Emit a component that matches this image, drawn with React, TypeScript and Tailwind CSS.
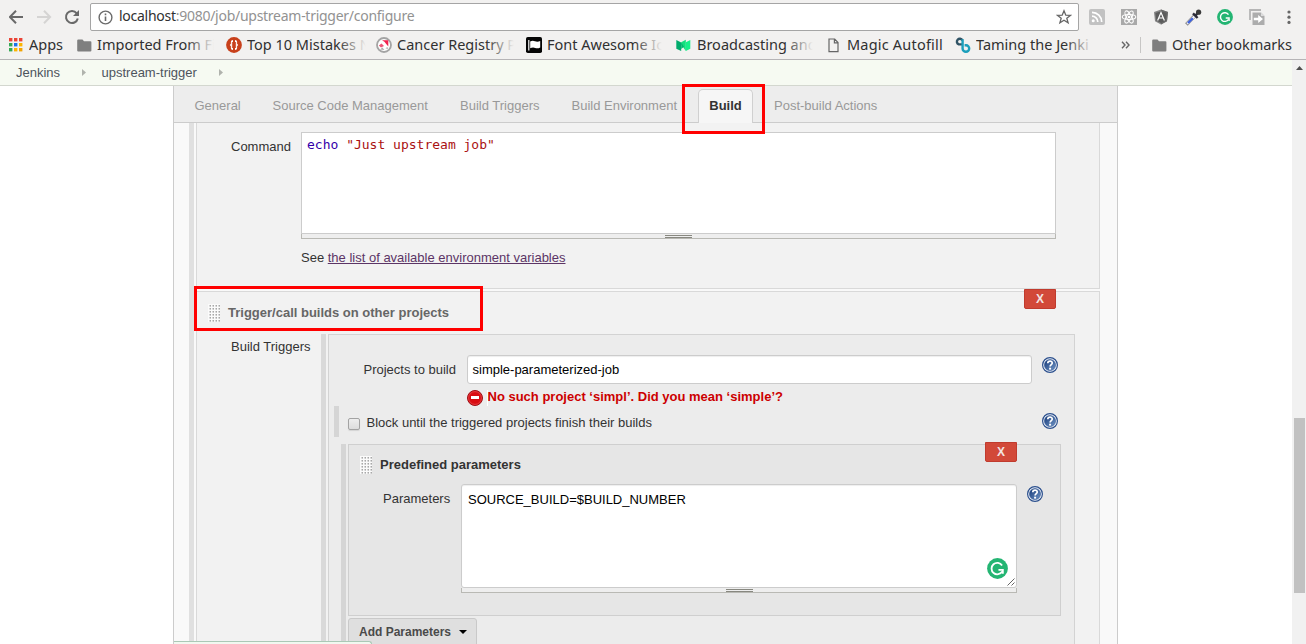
import type { ReactNode } from "react";

function HelpIcon() {
  return (
    <svg width="16" height="16" viewBox="0 0 16 16" className="shrink-0">
      <defs>
        <linearGradient id="helpFill" x1="0" y1="0" x2="1" y2="1">
          <stop offset="0" stopColor="#173a78" />
          <stop offset="1" stopColor="#7095c6" />
        </linearGradient>
      </defs>
      <circle cx="8" cy="8" r="7.4" fill="#f2f6fb" stroke="#2b4f8d" strokeWidth="1.2" />
      <circle cx="8" cy="8" r="5.6" fill="url(#helpFill)" stroke="#2b4f8d" strokeWidth="0.5" />
      <path d="M5.8 6.3C5.8 3.4 10.4 3.5 10.2 6.2C10.1 7.6 8.1 7.6 8.1 9.5" fill="none" stroke="#fff" strokeWidth="1.7" />
      <rect x="7.1" y="10.7" width="2" height="1.9" fill="#fff" />
    </svg>
  );
}

function ErrorIcon() {
  return (
    <svg width="16" height="16" viewBox="0 0 16 16" className="shrink-0">
      <circle cx="8" cy="8" r="7.5" fill="#d90d12" stroke="#9c1015" />
      <circle cx="8" cy="8" r="6.4" fill="none" stroke="#e8484b" strokeWidth="0.8" />
      <rect x="4" y="6" width="8" height="3" fill="#fff" />
    </svg>
  );
}

function GrammarlyIcon({ size }: { size: number }) {
  return (
    <svg width={size} height={size} viewBox="0 0 22 22">
      <circle cx="11" cy="11" r="10.9" fill="#24b573" />
      <path d="M15.8 7.8A6 6 0 1 0 15.9 14.2" fill="none" stroke="#fff" strokeWidth="1.9" />
      <path d="M12 12.4H16.6V16.4" fill="none" stroke="#fff" strokeWidth="1.9" />
    </svg>
  );
}

function DragHandle() {
  return (
    <svg width="12" height="18" viewBox="0 0 12 18" className="shrink-0" shapeRendering="crispEdges">
      <defs>
        <pattern id="dots" width="3" height="3" patternUnits="userSpaceOnUse">
          <rect width="3" height="3" fill="#fbfbfb" />
          <rect x="1" y="1" width="2" height="1" fill="#d2d2d2" />
          <rect x="1" y="2" width="1" height="1" fill="#e4e4e4" />
          <rect x="2" y="1" width="1" height="1" fill="#a8a8a8" />
          <rect x="2" y="2" width="1" height="1" fill="#c8c8c8" />
        </pattern>
      </defs>
      <rect width="12" height="18" fill="url(#dots)" />
    </svg>
  );
}

function ResizeBar() {
  return (
    <div className="flex h-[5px] items-start justify-center border-x border-b border-[#b9b9b4] bg-[#eee] pt-px">
      <div className="h-[3px] w-[27px] border-y border-[#888880]" />
    </div>
  );
}

function DeleteButton() {
  return (
    <button className="flex h-5 w-8 items-center justify-center rounded-b-[2px] border border-[#c03b2e] bg-[#d24939] text-[12px] leading-none font-bold text-[#f3e3e1]">
      X
    </button>
  );
}

function Folder() {
  return (
    <svg width="15" height="13" viewBox="0 0 15 13" className="shrink-0">
      <path d="M1.2 0.5H5.5L7 2.2H13.4Q14.4 2.2 14.4 3.2V11.4Q14.4 12.5 13.3 12.5H1.2Q0.2 12.5 0.2 11.4V1.5Q0.2 0.5 1.2 0.5Z" fill="#7f7f7f" />
    </svg>
  );
}

const APP_COLORS = ["#ea4335", "#ea4335", "#ea4335", "#34a853", "#1a73e8", "#fbb500", "#34a853", "#fbb500", "#f2a400"];

function AppsIcon() {
  return (
    <svg width="14" height="14" viewBox="0 0 14 14">
      {APP_COLORS.map((c, i) => (
        <rect key={i} x={(i % 3) * 5} y={Math.floor(i / 3) * 5} width="3.4" height="3.4" fill={c} />
      ))}
    </svg>
  );
}

function Bookmark({ icon, slot, gap, width, text, fade }: { icon: ReactNode; slot: string; gap: string; width: string; text: string; fade?: boolean }) {
  return (
    <div className={`flex shrink-0 items-center ${slot} ${gap}`}>
      {icon}
      <span className={`relative -top-px overflow-hidden whitespace-nowrap ${width}`}>
        {text}
        {fade && <span className="absolute inset-y-0 right-0 w-7 bg-gradient-to-r from-transparent to-[#f2f1f0]" />}
      </span>
    </div>
  );
}

function BrowserChrome() {
  return (
    <header className="h-[60px] shrink-0 border-b border-[#b6b4b6] bg-[#f2f1f0] font-['Noto_Sans','Open_Sans',sans-serif]">
      <div className="flex h-[34px] items-center">
        <div className="flex w-[90px] shrink-0 items-center pl-[9px]">
          <svg width="72" height="18" viewBox="0 0 72 18" fill="none" strokeWidth="2">
            <path d="M14 9H1.5M7 2.8L0.9 9L7 15.2" stroke="#696969" />
            <path d="M28 9H40.5M35 2.8L41.1 9L35 15.2" stroke="#d5d4d3" />
            <path d="M67.7 5.3A6 6 0 1 0 68.8 10.5" stroke="#696969" />
            <path d="M70 2V8H64Z" fill="#696969" />
          </svg>
        </div>
        <div className="flex h-7 w-[989px] shrink-0 items-center rounded-[2px] border border-[#a5a5a5] bg-white pr-[6px] pl-[7px]">
          <svg width="15" height="15" viewBox="0 0 15 15" fill="none" stroke="#6b6b6b">
            <circle cx="7.5" cy="7.5" r="6.4" strokeWidth="1.4" />
            <path d="M7.5 6.5V11M7.5 3.6V5.2" strokeWidth="1.6" />
          </svg>
          <span className="mb-[2px] ml-[6px] text-[14px] leading-5 tracking-[-0.27px] whitespace-nowrap text-[#929292]">
            <span className="text-[#303030]">localhost</span>:9080/job/upstream-trigger/configure
          </span>
          <svg width="16" height="16" viewBox="0 0 16 16" className="ml-auto">
            <path d="M8 1.8L9.8 6.2L14.4 6.4L10.8 9.3L12.1 13.9L8 11.3L3.9 13.9L5.2 9.3L1.6 6.4L6.2 6.2Z" fill="none" stroke="#666" strokeWidth="1.3" />
          </svg>
        </div>
        <div className="flex h-5 w-[210px] items-center pl-[10px]">
          <svg width="16" height="16" viewBox="0 0 16 16" className="shrink-0">
            <rect width="16" height="16" rx="2" fill="#c2c2c2" />
            <circle cx="4.2" cy="11.8" r="1.5" fill="#fff" />
            <path d="M3 7.2A5.8 5.8 0 0 1 8.8 13M3 3.3A9.7 9.7 0 0 1 12.7 13" fill="none" stroke="#fff" strokeWidth="1.7" />
          </svg>
          <svg width="16" height="16" viewBox="0 0 16 16" className="ml-4 shrink-0">
            <rect width="16" height="16" fill="#a9a9a9" />
            <g fill="none" stroke="#fff" strokeWidth="1.1">
              <ellipse cx="8" cy="8" rx="6.8" ry="2.5" />
              <ellipse cx="8" cy="8" rx="6.8" ry="2.5" transform="rotate(60 8 8)" />
              <ellipse cx="8" cy="8" rx="6.8" ry="2.5" transform="rotate(120 8 8)" />
            </g>
            <circle cx="8" cy="8" r="1.3" fill="#fff" />
          </svg>
          <svg width="16" height="16" viewBox="0 0 16 16" className="ml-4 shrink-0">
            <path d="M8 0.6L15 3L14 12.2L8 15.6L2 12.2L1 3Z" fill="#858585" />
            <path d="M8 0.6L15 3L14 12.2L8 15.6Z" fill="#6c6c6c" />
            <path d="M8 2.2L13.6 4L12.7 11.4L8 14.1L3.3 11.4L2.4 4Z" fill="#5c5c5c" />
            <path d="M4.6 11.4L8 3.5L11.4 11.4M5.8 9H10.2" fill="none" stroke="#fff" strokeWidth="1.2" />
          </svg>
          <svg width="17" height="17" viewBox="0 0 17 17" className="ml-4 shrink-0">
            <path d="M1.4 15.6L10 6.6" stroke="#8a8a8a" strokeWidth="3.6" />
            <path d="M2.2 14.8L9.6 7.2" stroke="#f4f4ff" strokeWidth="2.2" />
            <path d="M3 14L7.8 9.2" stroke="#3a5fdc" strokeWidth="2.2" />
            <path d="M8 4.4L12.6 9M10.3 6.7L13.8 3.2" stroke="#2c2c38" strokeWidth="2.4" />
            <circle cx="13.6" cy="3.2" r="2.6" fill="#3a3a3a" />
          </svg>
          <span className="ml-[15px] shrink-0"><GrammarlyIcon size={16} /></span>
          <svg width="16" height="16" viewBox="0 0 16 16" className="ml-4 shrink-0">
            <path d="M1 11V1H12" fill="none" stroke="#b5b5b5" strokeWidth="1.8" />
            <path d="M3.5 3.5H12L15.5 7V16H3.5Z" fill="#adadad" />
            <path d="M4.8 8.8H9.2V6L14 10L9.2 14V11.2H4.8Z" fill="#fff" />
            <path d="M12 3.5V7H15.5Z" fill="#ddd" />
          </svg>
          <svg width="4" height="16" viewBox="0 0 4 16" className="ml-[22px] shrink-0" fill="#666">
            <circle cx="2" cy="3" r="1.6" />
            <circle cx="2" cy="8.2" r="1.6" />
            <circle cx="2" cy="13.4" r="1.6" />
          </svg>
        </div>
      </div>
      <div className="flex h-[22px] items-center pl-[9px] text-[14.5px] leading-[22px] text-[#303030]">
        <Bookmark slot="w-[68px]" gap="gap-[6px]" width="w-9" text="Apps" icon={<AppsIcon />} />
        <Bookmark slot="w-[149px]" gap="gap-[5px]" width="w-[117px]" text="Imported From Fi" fade icon={<Folder />} />
        <Bookmark slot="w-[150px]" gap="gap-[5px]" width="w-[119px]" text="Top 10 Mistakes N" fade icon={
          <svg width="16" height="16" viewBox="0 0 16 16" className="shrink-0">
            <circle cx="8" cy="8" r="7.9" fill="#c8401b" />
            <path d="M7 3Q4.9 3 4.9 4.8V6.7L3.8 8L4.9 9.3V11.2Q4.9 13 7 13ZM9 3Q11.1 3 11.1 4.8V6.7L12.2 8L11.1 9.3V11.2Q11.1 13 9 13Z" fill="#fff" />
            <path d="M6.4 5V11M9.6 5V11" stroke="#c8401b" strokeWidth="0.9" />
          </svg>} />
        <Bookmark slot="w-[150px]" gap="gap-[5px]" width="w-[117px]" text="Cancer Registry P" fade icon={
          <svg width="16" height="16" viewBox="0 0 16 16" className="shrink-0">
            <circle cx="8" cy="8" r="7" fill="#fff" stroke="#a4a4a4" strokeWidth="1.8" />
            <path d="M6 3.2H12.3V9.4L10.2 7L8.4 4.8Z" fill="#f2224f" />
            <path d="M2.8 8.6L5.5 6.6L8 9L5 10.5Z" fill="#ee5577" />
            <path d="M4 12.4L6.4 10.6L8.4 13M9.5 11.2L11.5 10L12 12Z" fill="#a9a9a9" />
          </svg>} />
        <Bookmark slot="w-[150px]" gap="gap-[5px]" width="w-[115px]" text="Font Awesome Ic" fade icon={
          <svg width="16" height="16" viewBox="0 0 16 16" className="shrink-0">
            <rect width="16" height="16" rx="1.8" fill="#050505" />
            <path d="M2.8 3V13.5" stroke="#fff" strokeWidth="1.2" />
            <path d="M4.2 4.6Q6.5 3.2 9 4.3T14.2 4V10.5Q11.5 12 9.2 10.9T4.2 11.2Z" fill="#fff" />
          </svg>} />
        <Bookmark slot="w-[152px]" gap="gap-[6px]" width="w-[116px]" text="Broadcasting and" fade icon={
          <svg width="15" height="13" viewBox="0 0 15 13" className="shrink-0">
            <path d="M0.3 1L5.2 3.4V12L0.3 9.8Z" fill="#00ab6c" />
            <path d="M9.8 3.2L14.3 1V9.8L9.8 12Z" fill="#16f089" />
            <path d="M5.2 3.2L9.8 0.8V12L5.2 5.4Z" fill="#12e07d" />
            <path d="M5.2 3.2L8 7.8L5.2 10Z" fill="#00b76f" />
          </svg>} />
        <Bookmark slot="w-[127px]" gap="gap-[8px]" width="w-[100px] tracking-[0.2px]" text="Magic Autofill" icon={
          <svg width="11" height="15" viewBox="0 0 11 15" className="shrink-0">
            <path d="M1 1H6.7L10 4.5V13.6H1ZM6.4 1V4.9H10" fill="none" stroke="#666" strokeWidth="1.2" />
          </svg>} />
        <Bookmark slot="w-[166px]" gap="gap-[5px]" width="w-[117px]" text="Taming the Jenki" fade icon={
          <svg width="16" height="16" viewBox="0 0 16 16" className="shrink-0" fill="none" strokeWidth="2.4">
            <path d="M7.6 7.4H3.8A2.9 2.9 0 1 1 7.4 3.4" stroke="#315365" />
            <path d="M7.6 2.2V11.6A3.3 3.3 0 1 0 11 8.2H9.6" stroke="#1c9fbb" />
          </svg>} />
        <svg width="10" height="8" viewBox="0 0 10 8" className="shrink-0" fill="none" stroke="#666" strokeWidth="1.4">
          <path d="M1 0.8L4 4L1 7.2M5 0.8L8 4L5 7.2" />
        </svg>
        <div className="ml-[9px] h-4 w-px shrink-0 bg-[#c7c6c5]" />
        <div className="ml-[11px] flex shrink-0 items-center gap-[5px]">
          <Folder />
          <span className="mb-[2px] w-[122px] whitespace-nowrap">Other bookmarks</span>
        </div>
      </div>
    </header>
  );
}

function Breadcrumbs() {
  return (
    <nav className="flex h-[26px] shrink-0 items-center border-b border-[#d3d7cf] bg-[#f6faf2] pl-4 text-[#4d545d]">
      <span className="w-[66px]">Jenkins</span>
      <svg width="4" height="7" viewBox="0 0 4 7" fill="#b0b3ad"><path d="M0 0L4 3.5L0 7Z" /></svg>
      <span className="ml-[15.5px] w-[117.5px]">upstream-trigger</span>
      <svg width="4" height="7" viewBox="0 0 4 7" fill="#b0b3ad"><path d="M0 0L4 3.5L0 7Z" /></svg>
    </nav>
  );
}

function Tabs() {
  return (
    <div className="relative flex h-[37px] items-end border-b border-[#ccc] bg-[#ededed] pl-[20.5px] leading-[32px] whitespace-nowrap text-[#999]">
      <span className="w-[78px]">General</span>
      <span className="w-[187.5px]">Source Code Management</span>
      <span className="w-[111.5px]">Build Triggers</span>
      <span className="w-[126.5px]">Build Environment</span>
      <span className="-mb-px h-[34px] w-[55px] rounded-t-[5px] border-x border-t border-[#d0d0d0] bg-[#f6f6f6] text-center leading-[32px] font-bold text-[#333]">Build</span>
      <span className="ml-[21px]">Post-build Actions</span>
      <div className="absolute -top-[2px] left-[508px] z-10 h-[50px] w-[83px] border-3 border-[#ff0000]" />
    </div>
  );
}

function CommandBlock() {
  return (
    <section className="flex h-[166px] border-x border-b border-[#d9d9d9] bg-[#f2f2f2] pt-[9px] pl-[34px]">
      <label className="w-[70px] shrink-0 pt-[7px]">Command</label>
      <div className="w-[755px]">
        <div className="h-[102px] border border-[#ccc] bg-white px-[5px] pt-[4px] font-['DejaVu_Sans_Mono',monospace] text-[13px] leading-4 text-[#a11]">
          <span className="text-[#30a]">echo</span> "Just upstream job"
        </div>
        <ResizeBar />
        <p className="pt-[11px]">
          See <a className="text-[#5c3566] underline">the list of available environment variables</a>
        </p>
      </div>
    </section>
  );
}

function ParameterBlock() {
  return (
    <div className="relative h-[172px] w-[713px] border border-[#cfcfcf] bg-[#e6e6e6]">
      <div className="absolute -top-[3px] left-[636px]"><DeleteButton /></div>
      <div className="flex items-center gap-2 pt-[11px] pl-[11px]">
        <DragHandle />
        <b>Predefined parameters</b>
      </div>
      <div className="flex pt-[10px] pl-[34px]">
        <label className="w-[78px] pt-[7px]">Parameters</label>
        <div className="w-[556px]">
          <div className="relative h-[104px] rounded-[3px] border border-[#ccc] bg-white px-[6px] pt-[6px] leading-[18px] text-black shadow-[inset_0_1px_1px_rgba(0,0,0,0.07)]">
            SOURCE_BUILD=$BUILD_NUMBER
            <span className="absolute right-[8px] bottom-[8px]"><GrammarlyIcon size={21} /></span>
            <svg width="8" height="8" viewBox="0 0 8 8" className="absolute right-px bottom-px" stroke="#666" strokeWidth="1">
              <path d="M0.5 7.5L7.5 0.5M4.5 7.5L7.5 4.5" />
            </svg>
          </div>
          <ResizeBar />
        </div>
        <div className="pt-[2px] pl-[10px]"><HelpIcon /></div>
      </div>
    </div>
  );
}

function TriggerConfig() {
  return (
    <div className="h-[400px] w-[747px] border border-[#d3d3d3] bg-[#ececec]">
      <div className="flex h-[71px] pt-5">
        <label className="w-[138px] pt-[7px] pl-[34.5px]">Projects to build</label>
        <div className="w-[565px]">
          <div className="flex h-[29px] items-center rounded-[3px] border border-[#ccc] bg-white px-[4.5px] text-black shadow-[inset_0_1px_1px_rgba(0,0,0,0.07)]">
            simple-parameterized-job
          </div>
          <div className="flex h-[22px] items-end">
            <ErrorIcon />
            <span className="ml-1 h-4 border-l border-white leading-[14px] font-bold text-[#c00]"><span className="-ml-[0.5px]">No such project ‘simpl’. Did you mean ‘simple’?</span></span>
          </div>
        </div>
        <div className="pt-[2px] pl-[10px]"><HelpIcon /></div>
      </div>
      <div className="flex h-[38px] pl-[5px]">
        <div className="h-[31px] w-[5px] shrink-0 bg-[#d5d5d5]" />
        <div className="mt-[12px] ml-[9px] h-3 w-3 shrink-0 rounded-[2px] border border-[#a3a3a3] bg-gradient-to-b from-[#eee] to-[#ddd] shadow-[0_1px_1px_rgba(0,0,0,0.1)]" />
        <span className="w-[682px] shrink-0 pt-[9px] pl-[6.5px]">Block until the triggered projects finish their builds</span>
        <div className="pt-[7px]"><HelpIcon /></div>
      </div>
      <div className="flex pl-3">
        <div className="mr-[2px] w-[5px] bg-[#d5d5d5]" />
        <div className="h-[230px]">
          <ParameterBlock />
          <div className="mt-[2px] flex h-[31px] w-[129px] items-center rounded-[3px] border border-[#c9c9c9] bg-[#dfdfdf] pb-[3px] pl-[10px] text-[12px] font-bold text-[#4a4a4a]">
            <span className="w-[100px]">Add Parameters</span>
            <svg width="8" height="4" viewBox="0 0 8 4"><path d="M0 0H8L4 4Z" fill="#000" /></svg>
          </div>
        </div>
      </div>
    </div>
  );
}

function TriggerBlock() {
  return (
    <section className="relative mt-[2px] h-[450px] border border-[#d9d9d9] bg-[#f2f2f2]">
      <div className="absolute -top-[3px] left-[827px]"><DeleteButton /></div>
      <div className="absolute -top-[6px] -left-[3px] z-10 h-[45px] w-[289px] border-3 border-[#ff0000]" />
      <div className="flex h-[42px] items-center pl-[11px]">
        <DragHandle />
        <b className="ml-2 text-[#666]">Trigger/call builds on other projects</b>
      </div>
      <div className="flex">
        <label className="w-[124px] shrink-0 pt-[5px] pl-[34px] whitespace-nowrap">Build Triggers</label>
        <div className="mr-[2px] w-[5px] bg-[#d9d9d9]" />
        <TriggerConfig />
      </div>
    </section>
  );
}

export default function App() {
  return (
    <div className="flex h-[644px] w-[1306px] flex-col overflow-hidden bg-white font-['Liberation_Sans',Arial,sans-serif] text-[13px] leading-4 text-[#333]">
      <BrowserChrome />
      <div className="flex min-h-0 flex-1">
        <div className="flex w-[1292px] flex-col">
          <Breadcrumbs />
          <main className="relative ml-[173px] min-h-0 w-[945px] flex-1 border-x border-[#ccc] bg-[#f9f9f9]">
            <Tabs />
            <div className="flex h-[521px] overflow-hidden pl-[15px]">
              <div className="mr-[2px] w-[5px] bg-[#e0e0e0]" />
              <div className="w-[904px]">
                <CommandBlock />
                <TriggerBlock />
              </div>
            </div>
            <div className="absolute bottom-0 left-0 h-[3px] w-[198px] rounded-tr-[4px] border-t border-r border-[#abc8b6] bg-[#f1f8f0]" />
          </main>
        </div>
        <aside className="flex w-[14px] flex-col bg-[#f1f1f1]">
          <svg width="14" height="14" viewBox="0 0 14 14" className="shrink-0"><path d="M4 10L7.5 6L11 10Z" fill="#505050" /></svg>
          <div className="mt-[344px] ml-[2px] h-[175px] w-[11px] bg-[#c1c1c1]" />
        </aside>
      </div>
    </div>
  );
}
